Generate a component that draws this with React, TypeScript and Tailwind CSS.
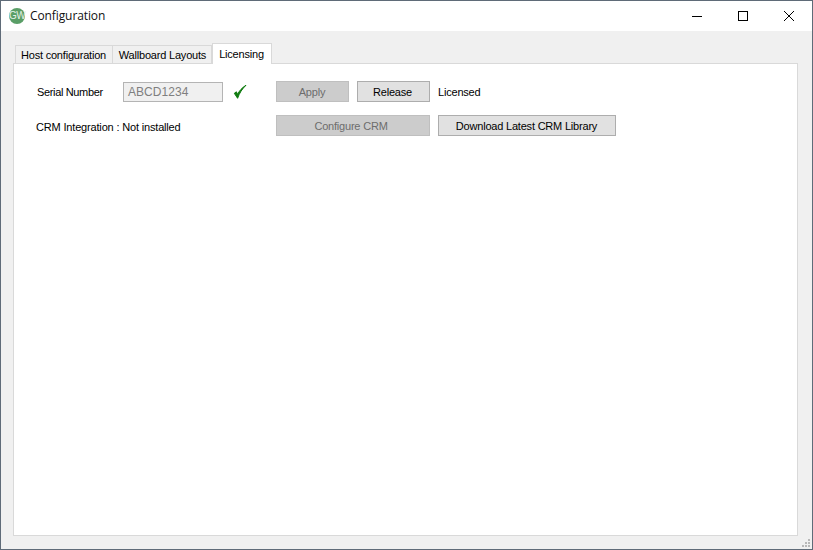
import React from "react";

const GrayBtn: React.FC<{ label: string; width: string; disabled?: boolean; shift?: string }> = ({ label, width, disabled, shift = "" }) => (
    <button
        className={
            disabled
                ? `${width} ${shift} h-[21px] shrink-0 pt-[2px] border border-[#bfbfbf] bg-[#cccccc] text-[#6d6d6d] text-[11px] tracking-[-0.2px] leading-none`
                : `${width} ${shift} h-[21px] shrink-0 pt-[2px] border border-[#adadad] bg-[#e1e1e1] text-black text-[11px] tracking-[-0.2px] leading-none`
        }
    >
        {label}
    </button>
);

export default function App() {
    return (
        <div className="w-[813px] h-[550px] flex flex-col border border-[#5f6b78] bg-[#f0f0f0] font-['Liberation_Sans',Arial,sans-serif] text-[11px] tracking-[-0.2px] text-black overflow-hidden relative">
            {/* title bar */}
            <div className="h-[30px] shrink-0 bg-white flex items-center">
                <div className="ml-[8px] w-[16px] h-[16px] rounded-full bg-[#5a9e67] flex items-center justify-center text-[10px] text-[#e4f0e6] tracking-[-0.5px] leading-none">
                    GW
                </div>
                <span className="ml-[5px] font-['Open_Sans',sans-serif] text-[12px] tracking-[-0.1px] text-[#111111]">Configuration</span>
                <div className="ml-auto flex items-center">
                    <svg width="12" height="12" viewBox="0 0 12 12" className="mr-[34px]">
                        <path d="M1 6.5h10" stroke="#000" fill="none" />
                    </svg>
                    <svg width="12" height="12" viewBox="0 0 12 12" className="mr-[34px]">
                        <rect x="1.5" y="1.5" width="9" height="9" stroke="#000" fill="none" />
                    </svg>
                    <svg width="12" height="12" viewBox="0 0 12 12" className="mr-[17px]">
                        <path d="M1 1l10 10M11 1L1 11" stroke="#000" fill="none" />
                    </svg>
                </div>
            </div>

            {/* tabs */}
            <div className="flex-1 flex flex-col pl-[12px] pr-[14px] pb-[13px] pt-[12px]">
                <div className="h-[21px] flex items-end pl-[2px] relative z-10 -mb-px shrink-0 whitespace-nowrap">
                    <div className="w-[98px] h-[19px] border border-b-0 border-[#d9d9d9] flex items-center justify-center pt-[1px] pr-[1px]">
                        Host configuration
                    </div>
                    <div className="w-[99px] h-[19px] border border-b-0 border-l-0 border-[#d9d9d9] flex items-center justify-center pt-[1px] pl-[1px]">
                        Wallboard Layouts
                    </div>
                    <div className="w-[60px] h-[21px] bg-white border border-b-0 border-[#d9d9d9] flex items-center justify-center pr-[1px]">
                        Licensing
                    </div>
                </div>

                {/* licensing panel */}
                <div className="flex-1 bg-white border border-[#d9d9d9] pt-[17px] flex flex-col gap-[13px]">
                    <div className="flex items-center h-[21px]">
                        <span className="ml-[23px] w-[86px] shrink-0 pt-[2px] tracking-[-0.35px]">Serial Number</span>
                        <div className="w-[100px] h-[20px] shrink-0 border border-[#b4b4b4] bg-[#f0f0f0] text-[#7f7f7f] text-[12px] tracking-[0.05px] flex items-center pl-[4px]">
                            ABCD1234
                        </div>
                        <svg width="14" height="16" viewBox="0 0 14 16" className="ml-[10px] shrink-0">
                            <path d="M1.3 9.3 L4.6 14.3 C6.5 9 9 5 13 1.2 C8.8 4 6.3 6.8 4.6 10.3 L3.4 7.8 Z" fill="#107c10" stroke="#107c10" strokeWidth="1" />
                        </svg>
                        <div className="ml-[29px] flex items-center gap-[8px]">
                            <GrayBtn label="Apply" width="w-[73px]" disabled shift="pr-[1px]" />
                            <GrayBtn label="Release" width="w-[73px]" shift="pr-[2px]" />
                            <span className="pt-[1px]">Licensed</span>
                        </div>
                    </div>
                    <div className="flex items-center h-[21px]">
                        <span className="ml-[22px] w-[240px] shrink-0 pt-[4px] tracking-[-0.17px]">CRM Integration : Not installed</span>
                        <div className="flex items-center gap-[8px]">
                            <GrayBtn label="Configure CRM" width="w-[154px]" disabled shift="pr-[4px]" />
                            <GrayBtn label="Download Latest CRM Library" width="w-[178px]" shift="pr-[1px]" />
                        </div>
                    </div>
                </div>
            </div>

            {/* resize grip */}
            <svg width="10" height="10" viewBox="0 0 10 10" className="absolute right-[1px] bottom-[1px]">
                <path d="M7 1h2v2H7zM4 4h2v2H4zM7 4h2v2H7zM1 7h2v2H1zM4 7h2v2H4zM7 7h2v2H7z" fill="#b8b8b8" />
            </svg>
        </div>
    );
}
